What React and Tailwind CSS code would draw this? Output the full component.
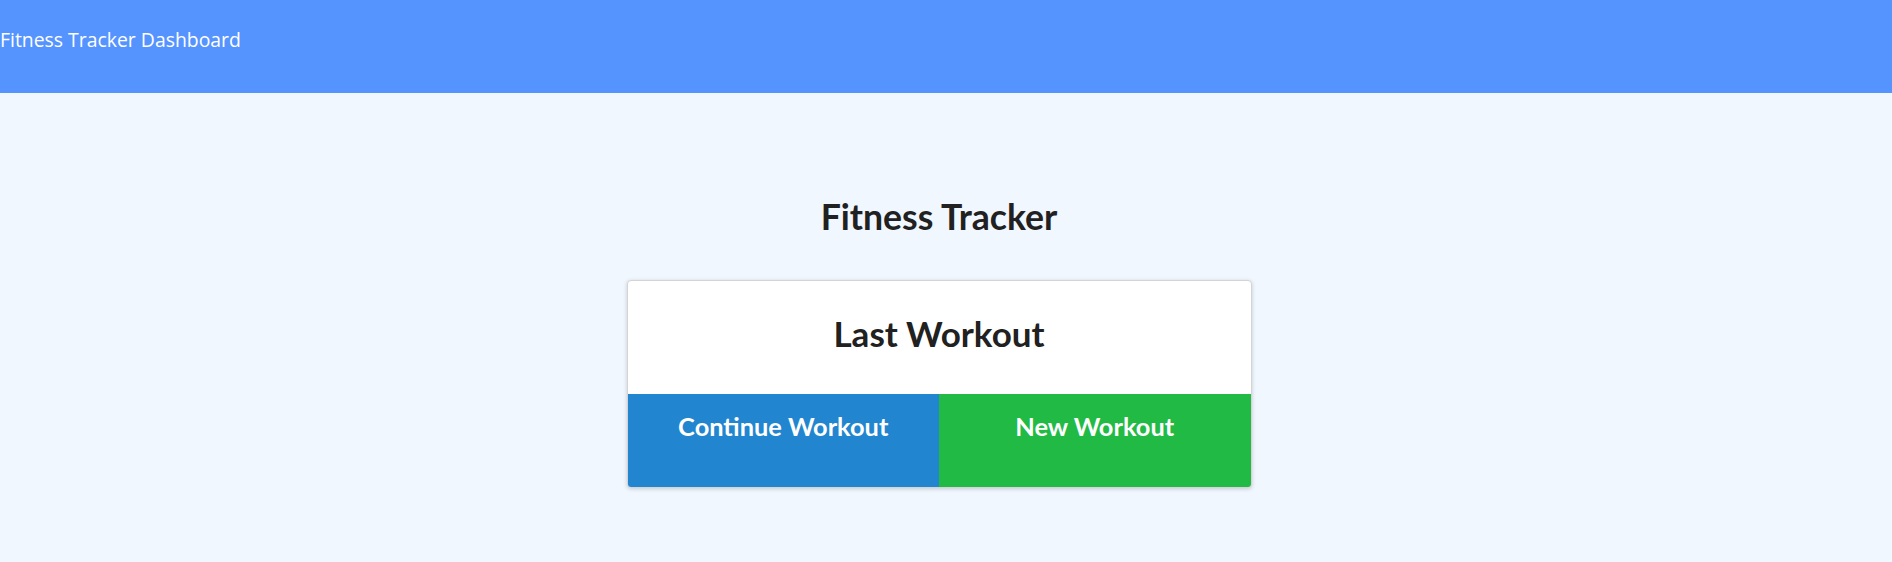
export default function App() {
  return (
    <div className="min-h-[562px] bg-[#f0f7ff] font-['Lato',sans-serif]">
      <header className="h-[93px] bg-[#5593ff] flex items-start">
        <span className="mt-[25px] text-white text-[19.4px] font-['Open_Sans',sans-serif]">
          Fitness Tracker Dashboard
        </span>
      </header>

      <main className="flex flex-col items-center pr-[14px]">
        <h1 className="mt-[98px] text-[35.6px] leading-[52px] font-bold text-[#212121]">
          Fitness Tracker
        </h1>

        <div className="mt-[37px] w-[625px] bg-white rounded-[4px] border border-[#d4d4d5] shadow-[0_1px_4px_0_rgba(0,0,0,0.18)] overflow-hidden">
          <div className="h-[113px] flex items-center justify-center pb-[8px]">
            <h2 className="text-[35px] font-bold text-[#212121]">Last Workout</h2>
          </div>
          <div className="flex">
            <button className="flex-1 h-[93px] bg-[#2185d0] text-white text-[25.4px] font-bold pt-[13px] flex justify-center items-start">
              Continue Workout
            </button>
            <button className="flex-1 h-[93px] bg-[#21ba45] text-white text-[25.4px] font-bold pt-[13px] flex justify-center items-start">
              New Workout
            </button>
          </div>
        </div>
      </main>
    </div>
  );
}
